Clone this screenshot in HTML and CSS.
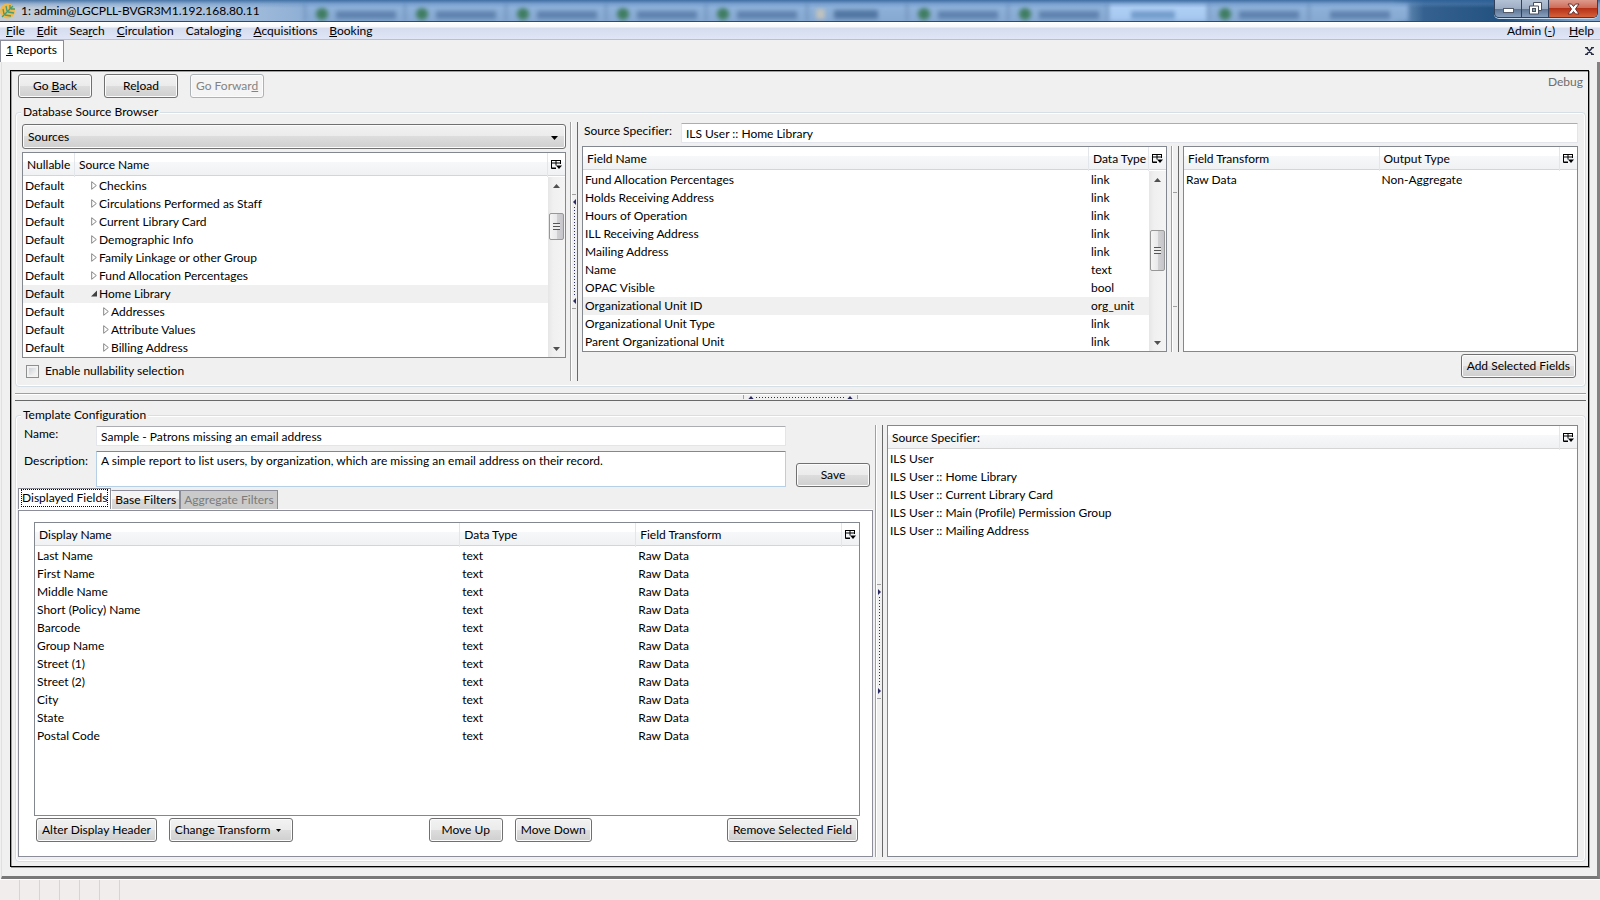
FILE: index.html
```html
<!DOCTYPE html>
<html lang="en">
<head>
<meta charset="utf-8">
<title>1: admin@LGCPLL-BVGR3M1.192.168.80.11</title>
<link rel="stylesheet" href="styles.css">
</head>
<body>
<svg class="defs" aria-hidden="true">
  <symbol id="closed" viewBox="0 0 6 9"><path d="M.7 .7v7.600L5.300 4.500z" fill="#fff" stroke="#858585"/></symbol>
  <symbol id="open" viewBox="0 0 6 9"><path d="M6 1.500v6H0z" fill="#404040"/></symbol>
  <symbol id="picker" viewBox="0 0 11 10"><path d="M0 .5h9.500M.5 0v8.500H5M5 0v5.500M9.500 0v4M0 3h10M1 8h4" fill="none" stroke="#000"/><path d="M5 5.500h6L8 9z" fill="#000"/></symbol>
  <symbol id="up" viewBox="0 0 7 4"><path d="M0 4h7L3.500 0z"/></symbol>
  <symbol id="down" viewBox="0 0 7 4"><path d="M0 0h7L3.500 4z"/></symbol>
  <symbol id="left" viewBox="0 0 3 6"><path d="M3 0v6L0 3z"/></symbol>
  <symbol id="right" viewBox="0 0 3 6"><path d="M0 0v6l3-3z"/></symbol>
</svg>

<header class="titlebar">
  <div class="backdrop" aria-hidden="true">
    <i></i><i></i><i></i><i></i><i></i><i class="plain"></i><i></i><i></i><i class="lit"></i><i></i><i class="bare"></i>
  </div>
  <svg class="logo" viewBox="0 0 16 17" aria-hidden="true">
    <circle cx="7.500" cy="9" r="7.500" fill="#efb94c"/>
    <path d="M2 15 13 4M4 12 3 7M7 9 6 4M10 7V3M5 13l6 1M8 10l6 1M11 7l4 0" fill="none" stroke="#4b9a72" stroke-width="1.300"/>
  </svg>
  <h1>1: admin@LGCPLL-BVGR3M1.192.168.80.11</h1>
  <div class="winbtns">
    <button type="button" aria-label="Minimize"><svg width="11" height="5" viewBox="0 0 11 5"><rect x=".5" y=".5" width="10" height="4" fill="#fff" stroke="#555a68"/></svg></button>
    <button type="button" aria-label="Restore"><svg width="13" height="13" viewBox="0 0 13 13"><path d="M4.500.5h8v8h-3v3.500h-9v-8h4z" fill="#fff" stroke="#4a4f5e"/><path d="M4.500 4h5v5" fill="none" stroke="#4a4f5e"/><rect x="3.500" y="6.500" width="3" height="3" fill="#8aa" stroke="#4a4f5e"/></svg></button>
    <button type="button" class="shut" aria-label="Close"><svg width="13" height="12" viewBox="0 0 13 12"><path d="M1 1h3.500l2 2.500L8.500 1H12L8.500 6l3.500 5H8.500l-2-2.500-2 2.500H1l3.500-5z" fill="#fff" stroke="#6b3030"/></svg></button>
  </div>
</header>

<nav class="menubar">
  <a href="#"><u>F</u>ile</a><a href="#"><u>E</u>dit</a><a href="#">Sea<u>r</u>ch</a><a href="#"><u>C</u>irculation</a><a href="#">Catalo<u>g</u>ing</a><a href="#"><u>A</u>cquisitions</a><a href="#"><u>B</u>ooking</a>
  <span class="grow"></span>
  <a href="#">Admin (<u>-</u>)</a><a href="#"><u>H</u>elp</a>
</nav>

<div class="wintabs">
  <button type="button" class="wintab"><u>1</u> Reports</button>
  <button type="button" class="tabclose" aria-label="Close tab"><svg width="9" height="8" viewBox="0 0 9 8"><path d="M0 .5h3M6 .5h3M0 7.500h3M6 7.500h3M1.500 .5l6 7M7.500 .5l-6 7" fill="none" stroke="#2b2f45" stroke-width="1.500"/></svg></button>
</div>

<main class="window">
 <div class="frame">
  <div class="toolbar">
    <button type="button" class="btn nav">Go <u>B</u>ack</button>
    <button type="button" class="btn nav">Re<u>l</u>oad</button>
    <button type="button" class="btn nav" disabled>Go Forwar<u>d</u></button>
    <span class="debug">Debug</span>
  </div>

  <fieldset class="group source">
    <legend>Database Source Browser</legend>
    <div class="cols browser">
      <div class="sources">
        <div class="pick">
          <select aria-label="Sources"><option>Sources</option></select>
          <svg width="7" height="4"><use href="#down"/></svg>
        </div>
        <div class="box">
          <table>
            <colgroup><col class="c-null"><col></colgroup>
            <thead><tr><th>Nullable</th><th>Source Name</th></tr></thead>
            <tbody class="tree">
              <tr><td>Default</td><td><svg><use href="#closed"/></svg>Checkins</td></tr>
              <tr><td>Default</td><td><svg><use href="#closed"/></svg>Circulations Performed as Staff</td></tr>
              <tr><td>Default</td><td><svg><use href="#closed"/></svg>Current Library Card</td></tr>
              <tr><td>Default</td><td><svg><use href="#closed"/></svg>Demographic Info</td></tr>
              <tr><td>Default</td><td><svg><use href="#closed"/></svg>Family Linkage or other Group</td></tr>
              <tr><td>Default</td><td><svg><use href="#closed"/></svg>Fund Allocation Percentages</td></tr>
              <tr class="sel"><td>Default</td><td><svg><use href="#open"/></svg>Home Library</td></tr>
              <tr class="sub"><td>Default</td><td><svg><use href="#closed"/></svg>Addresses</td></tr>
              <tr class="sub"><td>Default</td><td><svg><use href="#closed"/></svg>Attribute Values</td></tr>
              <tr class="sub"><td>Default</td><td><svg><use href="#closed"/></svg>Billing Address</td></tr>
            </tbody>
          </table>
          <div class="side">
            <button type="button" class="colpick" aria-label="Choose columns"><svg width="11" height="10"><use href="#picker"/></svg></button>
            <div class="scroll"><svg width="7" height="4"><use href="#up"/></svg><span class="thumb near"></span><svg width="7" height="4"><use href="#down"/></svg></div>
          </div>
        </div>
        <label class="check"><input type="checkbox"> Enable nullability selection</label>
      </div>

      <div class="split vert"><span class="grip"><svg><use href="#left"/></svg><i></i><svg><use href="#left"/></svg></span></div>

      <div class="fields">
        <div class="spec"><label for="spec">Source Specifier:</label><input id="spec" type="text" value="ILS User :: Home Library"></div>
        <div class="cols pair">
          <div class="box">
            <table>
              <colgroup><col><col class="c-type"></colgroup>
              <thead><tr><th>Field Name</th><th>Data Type</th></tr></thead>
              <tbody>
                <tr><td>Fund Allocation Percentages</td><td>link</td></tr>
                <tr><td>Holds Receiving Address</td><td>link</td></tr>
                <tr><td>Hours of Operation</td><td>link</td></tr>
                <tr><td>ILL Receiving Address</td><td>link</td></tr>
                <tr><td>Mailing Address</td><td>link</td></tr>
                <tr><td>Name</td><td>text</td></tr>
                <tr><td>OPAC Visible</td><td>bool</td></tr>
                <tr class="sel"><td>Organizational Unit ID</td><td>org_unit</td></tr>
                <tr><td>Organizational Unit Type</td><td>link</td></tr>
                <tr><td>Parent Organizational Unit</td><td>link</td></tr>
              </tbody>
            </table>
            <div class="side">
              <button type="button" class="colpick" aria-label="Choose columns"><svg width="11" height="10"><use href="#picker"/></svg></button>
              <div class="scroll"><svg width="7" height="4"><use href="#up"/></svg><span class="thumb far"></span><svg width="7" height="4"><use href="#down"/></svg></div>
            </div>
          </div>
          <div class="split vert"><span class="grip empty"></span></div>
          <div class="box">
            <table>
              <colgroup><col class="c-half"><col></colgroup>
              <thead><tr><th>Field Transform</th><th>Output Type</th></tr></thead>
              <tbody><tr><td>Raw Data</td><td>Non-Aggregate</td></tr></tbody>
            </table>
            <div class="side"><button type="button" class="colpick" aria-label="Choose columns"><svg width="11" height="10"><use href="#picker"/></svg></button></div>
          </div>
        </div>
        <button type="button" class="btn add">Add Selected Fields</button>
      </div>
    </div>
  </fieldset>

  <div class="split horiz"><span class="grip"><svg><use href="#up"/></svg><i></i><svg><use href="#up"/></svg></span></div>

  <fieldset class="group template">
    <legend>Template Configuration</legend>
    <div class="cols config">
      <div class="editor">
        <div class="form">
          <label for="name">Name:</label><input id="name" type="text" value="Sample - Patrons missing an email address">
          <label for="desc" class="desc">Description:</label><textarea id="desc">A simple report to list users, by organization, which are missing an email address on their record.</textarea>
          <button type="button" class="btn save">Save</button>
        </div>
        <div class="tabs" role="tablist">
          <button type="button" role="tab" aria-selected="true" class="tab on"><span>Displayed Fields</span></button>
          <button type="button" role="tab" class="tab">Base Filters</button>
          <button type="button" role="tab" class="tab" disabled>Aggregate Filters</button>
        </div>
        <div class="panel">
          <div class="box">
            <table>
              <colgroup><col class="c-name"><col class="c-kind"><col></colgroup>
              <thead><tr><th>Display Name</th><th>Data Type</th><th>Field Transform</th></tr></thead>
              <tbody>
                <tr><td>Last Name</td><td>text</td><td>Raw Data</td></tr>
                <tr><td>First Name</td><td>text</td><td>Raw Data</td></tr>
                <tr><td>Middle Name</td><td>text</td><td>Raw Data</td></tr>
                <tr><td>Short (Policy) Name</td><td>text</td><td>Raw Data</td></tr>
                <tr><td>Barcode</td><td>text</td><td>Raw Data</td></tr>
                <tr><td>Group Name</td><td>text</td><td>Raw Data</td></tr>
                <tr><td>Street (1)</td><td>text</td><td>Raw Data</td></tr>
                <tr><td>Street (2)</td><td>text</td><td>Raw Data</td></tr>
                <tr><td>City</td><td>text</td><td>Raw Data</td></tr>
                <tr><td>State</td><td>text</td><td>Raw Data</td></tr>
                <tr><td>Postal Code</td><td>text</td><td>Raw Data</td></tr>
              </tbody>
            </table>
            <div class="side"><button type="button" class="colpick" aria-label="Choose columns"><svg width="11" height="10"><use href="#picker"/></svg></button></div>
          </div>
          <div class="actions">
            <div><button type="button" class="btn wide">Alter Display Header</button><button type="button" class="btn wide menu">Change Transform <svg width="5" height="3" viewBox="0 0 7 4"><use href="#down"/></svg></button></div>
            <div><button type="button" class="btn nav">Move Up</button><button type="button" class="btn nav">Move Down</button></div>
            <div><button type="button" class="btn wide">Remove Selected Field</button></div>
          </div>
        </div>
      </div>

      <div class="split vert"><span class="grip"><svg><use href="#right"/></svg><i></i><svg><use href="#right"/></svg></span></div>

      <div class="box">
        <table>
          <thead><tr><th>Source Specifier:</th></tr></thead>
          <tbody>
            <tr><td>ILS User</td></tr>
            <tr><td>ILS User :: Home Library</td></tr>
            <tr><td>ILS User :: Current Library Card</td></tr>
            <tr><td>ILS User :: Main (Profile) Permission Group</td></tr>
            <tr><td>ILS User :: Mailing Address</td></tr>
          </tbody>
        </table>
        <div class="side"><button type="button" class="colpick" aria-label="Choose columns"><svg width="11" height="10"><use href="#picker"/></svg></button></div>
      </div>
    </div>
  </fieldset>
 </div>
</main>

<footer class="status"><i></i><i></i><i></i><i></i><i></i><i></i></footer>
</body>
</html>
```
FILE: styles.css
```css
* { box-sizing: border-box; }
body {
  margin: 0;
  min-height: 100vh;
  display: flex;
  flex-direction: column;
  background: #f0f0f0;
  color: #000;
  font: 12px/18px Lato, "Open Sans", sans-serif;
  font-variant-ligatures: none;
}
button, input, select, textarea { font: inherit; font-variant-ligatures: none; color: inherit; margin: 0; }
svg { display: block; flex: none; }
.defs { position: absolute; width: 0; height: 0; }
a { color: inherit; text-decoration: none; }
.grow { flex: 1; }

/* Title bar */
.titlebar {
  position: relative;
  display: flex;
  align-items: center;
  gap: 5px;
  height: 22px;
  border-bottom: 1px solid #3d4656;
  background: linear-gradient(90deg, #c3cad4 0, #bacbe0 100px, #9db9da 260px, #86a9d1 330px, #86a9d1 87%, #34618f 89%, #23517f 94%, #86a9cf 99%);
  overflow: hidden;
}
.titlebar::after {
  content: "";
  position: absolute;
  inset: 0;
  background: linear-gradient(#2f629acc 0, #5b8abf66 4px, #fff0 8px);
}
.backdrop {
  position: absolute;
  inset: 3px 12% 0 19%;
  display: grid;
  grid-template-columns: repeat(11, 1fr);
  filter: blur(2px);
}
.backdrop i {
  border-left: 2px solid #6d8fb9;
  background:
    radial-gradient(circle at 16px 11px, #3f7d61 5px, #3f7d6100 7px),
    linear-gradient(#5f83af, #5f83af) 30px 8px / 60px 8px no-repeat,
    linear-gradient(#91b4dc, #85a8d1);
}
.backdrop .plain { background: linear-gradient(#c0c3bd, #c0c3bd) 8px 6px / 9px 10px no-repeat, linear-gradient(#5277a3, #5277a3) 26px 7px / 44px 9px no-repeat, linear-gradient(#91b4dc, #85a8d1); }
.backdrop .lit { background: linear-gradient(#749dcc, #749dcc) 22px 8px / 44px 8px no-repeat, linear-gradient(#b3d2f5, #a3c7f0); }
.backdrop .bare { background: linear-gradient(#5f83af, #5f83af) 20px 8px / 60px 8px no-repeat, linear-gradient(#91b4dc, #85a8d1); }
.logo { position: relative; z-index: 1; width: 16px; height: 17px; }
.titlebar h1 { position: relative; z-index: 1; flex: 1; margin: 0; font-size: 12px; font-weight: 400; line-height: 20px; }
.winbtns {
  position: relative;
  z-index: 1;
  align-self: flex-start;
  display: flex;
  height: 18px;
  margin-right: 2px;
  border: 1px solid #33405a;
  border-top: 0;
  border-radius: 0 0 5px 5px;
  overflow: hidden;
  box-shadow: 0 1px 0 #c6d8ec;
}
.winbtns button {
  display: flex;
  align-items: center;
  justify-content: center;
  width: 27px;
  padding: 0;
  border: 0;
  border-right: 1px solid #33405a;
  background: linear-gradient(#b4c2d4, #9aabc2 9px, #5c7391 9px, #88a0bd);
}
.winbtns button:first-child { align-items: flex-end; padding-bottom: 4px; }
.winbtns .shut { width: 48px; border: 0; background: linear-gradient(#dd9a8c, #cf6a58 8px, #b32f16 8px, #d5613a); }

/* Menu bar and window tabs */
.menubar {
  display: flex;
  gap: 12px;
  height: 18px;
  padding: 0 6px;
  border-bottom: 1px solid #b4c0d4;
  background: linear-gradient(#fff, #f6f8fc 5px, #d5dcee 6px, #e0e6f6);
}
.menubar a:last-child { margin-left: 2px; }
.wintabs { display: flex; justify-content: space-between; height: 22px; padding-right: 6px; }
.wintab { padding: 0 6px 4px 5px; border: 1px solid #8b8d98; border-bottom: 0; background: #fff; line-height: 16px; }
.tabclose { padding: 0; border: 0; background: none; }

/* Window body */
.window {
  flex: 1;
  display: flex;
  padding: 8px 8px 9px 8px;
  margin-left: 1px;
  border-style: solid;
  border-width: 0 3px 3px 1px;
  border-color: #f0f0f0 #828282 #787878 #e0e0e0;
}
.frame {
  flex: 1;
  display: flex;
  flex-direction: column;
  min-width: 0;
  padding: 3px 2px 4px 4px;
  border: 1px solid #000;
  box-shadow: inset 1px 1px #a0a0a0, 1px 1px #a0a0a0;
}
.toolbar { display: flex; gap: 12px; padding-left: 3px; }
.toolbar .debug { margin-left: auto; color: #6d6d6d; line-height: 16px; padding-right: 3px; }

.btn {
  height: 24px;
  padding: 0 5px;
  border: 1px solid #707070;
  border-radius: 3px;
  background: linear-gradient(#f2f2f2, #ebebeb 50%, #dddddd 50%, #cfcfcf);
  box-shadow: inset 0 0 0 1px #fcfcfc;
  line-height: 20px;
  white-space: nowrap;
}
.btn.nav { min-width: 74px; }
.btn:disabled { border-color: #adb2b5; background: #f4f4f4; color: #838383; }
.wide { min-width: 120px; }
.menu { display: flex; align-items: center; gap: 6px; padding-right: 11px; }

.group {
  min-width: 0;
  margin: 0;
  border: 1px solid #d5dfe5;
  border-radius: 4px;
  box-shadow: inset 0 0 0 1px #fff;
}
.group legend { height: 16px; padding: 0 2px; line-height: 16px; background: #f0f0f0; }
.source { margin-top: 6px; padding: 2px 7px 5px 6px; }
.source legend { margin-left: -1px; }
.template { flex: 1; display: flex; flex-direction: column; margin-top: 6px; padding: 2px 7px 4px 2px; }
.template legend { margin-left: 3px; }

/* Split panes */
.cols { display: grid; }
.browser { grid-template-columns: minmax(0, 544fr) auto minmax(0, 996fr); }
.pair { grid-template-columns: minmax(0, 585fr) auto minmax(0, 395fr); }
.config { flex: 1; grid-template-columns: minmax(0, 855fr) auto minmax(0, 691fr); }
.split { display: flex; align-items: center; justify-content: center; }
.vert { width: 8px; margin: 0 4px; border-left: 1px solid #a0a0a0; border-right: 1px solid #696969; box-shadow: inset 1px 0 #fff; }
.config > .vert { margin-left: 2px; }
.horiz { height: 8px; margin-top: 6px; border-top: 1px solid #a0a0a0; border-bottom: 1px solid #696969; box-shadow: inset 0 1px #fff; }
.grip { display: flex; align-items: center; justify-content: space-between; fill: #2b2b63; }
.vert .grip { flex-direction: column; width: 4px; height: 115px; padding: 4px 0; border: solid #a0a0a0; border-width: 1px 0; }
.vert .grip svg { width: 3px; height: 6px; }
.vert .grip i { width: 1px; height: 89px; background: repeating-linear-gradient(#2b2b63 0 1px, #0000 1px 3px); }
.horiz .grip { width: 115px; height: 4px; padding: 0 4px; border: solid #a0a0a0; border-width: 0 1px; }
.horiz .grip svg { width: 6px; height: 3px; }
.horiz .grip i { height: 1px; width: 89px; background: repeating-linear-gradient(90deg, #2b2b63 0 1px, #0000 1px 3px); }

/* Lists */
.box { display: flex; align-items: stretch; border: 1px solid #828790; background: #fff; }
.box table { flex: 1; align-self: flex-start; width: 0; border-spacing: 0; table-layout: fixed; }
th, .colpick {
  height: 24px;
  background: linear-gradient(#fff 9px, #f7f8fa 9px, #f0f1f3 22px, #d5d5d5 22px 23px, #fff 23px);
}
th { padding: 0 0 0 4px; text-align: left; font-weight: 400; white-space: nowrap; border-right: 1px solid #e3e6ea; line-height: 22px; }
td { height: 18px; padding: 0 0 0 2px; white-space: nowrap; overflow: hidden; }
.sel td { background: #f0f0f0; }
.tree td + td { padding-left: 24px; }
.tree .sub td + td { padding-left: 36px; }
.tree svg { float: left; width: 6px; height: 9px; margin: 4px 2px 0 -8px; }
.c-null { width: 52px; }
.c-type { width: 60px; }
.c-half { width: 52%; }
.c-name { width: 52.7%; }
.c-kind { width: 21.8%; }
.side { display: flex; flex-direction: column; width: 17px; }
.colpick { display: flex; align-items: center; justify-content: center; width: 100%; padding: 0; border: 0; }
.scroll {
  flex: 1;
  display: flex;
  flex-direction: column;
  align-items: center;
  justify-content: space-between;
  padding: 7px 0 6px;
  background: linear-gradient(90deg, #e6e6e6, #f0f0f0 5px, #f4f4f4);
  fill: #505050;
}
.thumb {
  width: 15px;
  border: 1px solid #979797;
  border-radius: 2px;
  background:
    repeating-linear-gradient(#555 0 1px, #eee 1px 3px) center / 7px 7px no-repeat,
    linear-gradient(90deg, #f5f5f5, #e9e9eb 50%, #d2d2d5 50%, #c6c6ca);
}
.near { height: 27px; margin-bottom: 82px; }
.far { height: 41px; margin-bottom: 23px; }

/* Source browser */
.sources { display: flex; flex-direction: column; gap: 3px; padding-top: 2px; }
.pick { position: relative; height: 25px; }
.pick select {
  width: 100%;
  height: 25px;
  padding: 0 5px;
  border: 1px solid #707070;
  border-radius: 3px;
  appearance: none;
  background: linear-gradient(#f2f2f2, #ebebeb 50%, #dddddd 50%, #cfcfcf);
  box-shadow: inset 0 0 0 1px #fcfcfc;
}
.pick svg { position: absolute; right: 8px; top: 12px; }
.check { display: flex; align-items: center; gap: 6px; height: 20px; padding-left: 4px; }
.check input {
  width: 13px;
  height: 13px;
  appearance: none;
  border: 1px solid #8e8f8f;
  background: linear-gradient(135deg, #cfd3d8, #f6f6f6) content-box;
  padding: 2px;
  box-shadow: inset 0 0 0 1px #f4f4f4;
}
.fields { display: flex; flex-direction: column; gap: 2px; padding-top: 1px; }
.spec { display: flex; gap: 9px; padding: 0 0 1px 2px; }
.spec label { line-height: 16px; }
.spec input { flex: 1; min-width: 0; }
input[type="text"], textarea {
  height: 20px;
  padding: 0 4px;
  border: 1px solid #e2e6ec;
  border-top-color: #abadb3;
  border-radius: 1px;
  outline: 0;
  background: #fff;
}
.add { align-self: flex-end; margin-right: 2px; }

/* Template editor */
.editor { display: flex; flex-direction: column; }
.form { display: grid; grid-template-columns: 72px 1fr 74px; gap: 5px 0; padding: 1px 3px 0 6px; }
.form textarea { height: 36px; resize: none; line-height: 18px; border-color: #b5cfe7; border-top-color: #5794bf; margin-right: 10px; }
.form input { margin-right: 10px; grid-column: 2; }
.form .desc { grid-column: 1; }
.form label { line-height: 16px; }
.form .desc { line-height: 20px; }
.save { align-self: end; }
.tabs { display: flex; align-items: flex-end; height: 23px; padding-top: 2px; border-bottom: 1px solid #fff; }
.tab { height: 19px; padding: 0 3px; border: 1px solid #8b8d98; border-bottom: 0; border-left-color: #fff; background: linear-gradient(#f4f4f4 45%, #dcdcdc 45%, #d2d2d2); line-height: 16px; white-space: nowrap; }
.tab.on { height: 21px; padding: 0 3px 2px; background: #fff; border-left-color: #8b8d98; }
.tab.on span { display: block; outline: 1px dotted #000; line-height: 16px; }
.tab:disabled { border-left-color: #8b8d98; background: #cacaca; color: #7b7b7b; }
.panel { flex: 1; display: flex; flex-direction: column; gap: 2px; padding: 11px 12px 14px 15px; border: 1px solid #8b8d98; background: #fff; }
.panel .box { flex: 1; }
.actions { display: flex; justify-content: space-between; padding: 0 2px; }
.actions div { display: flex; gap: 12px; }

/* Status bar */
.status { display: flex; height: 21px; border-top: 1px solid #fff; background: #f0edec; }
.status i { width: 20px; border-right: 1px solid #d8d4d3; }
```
